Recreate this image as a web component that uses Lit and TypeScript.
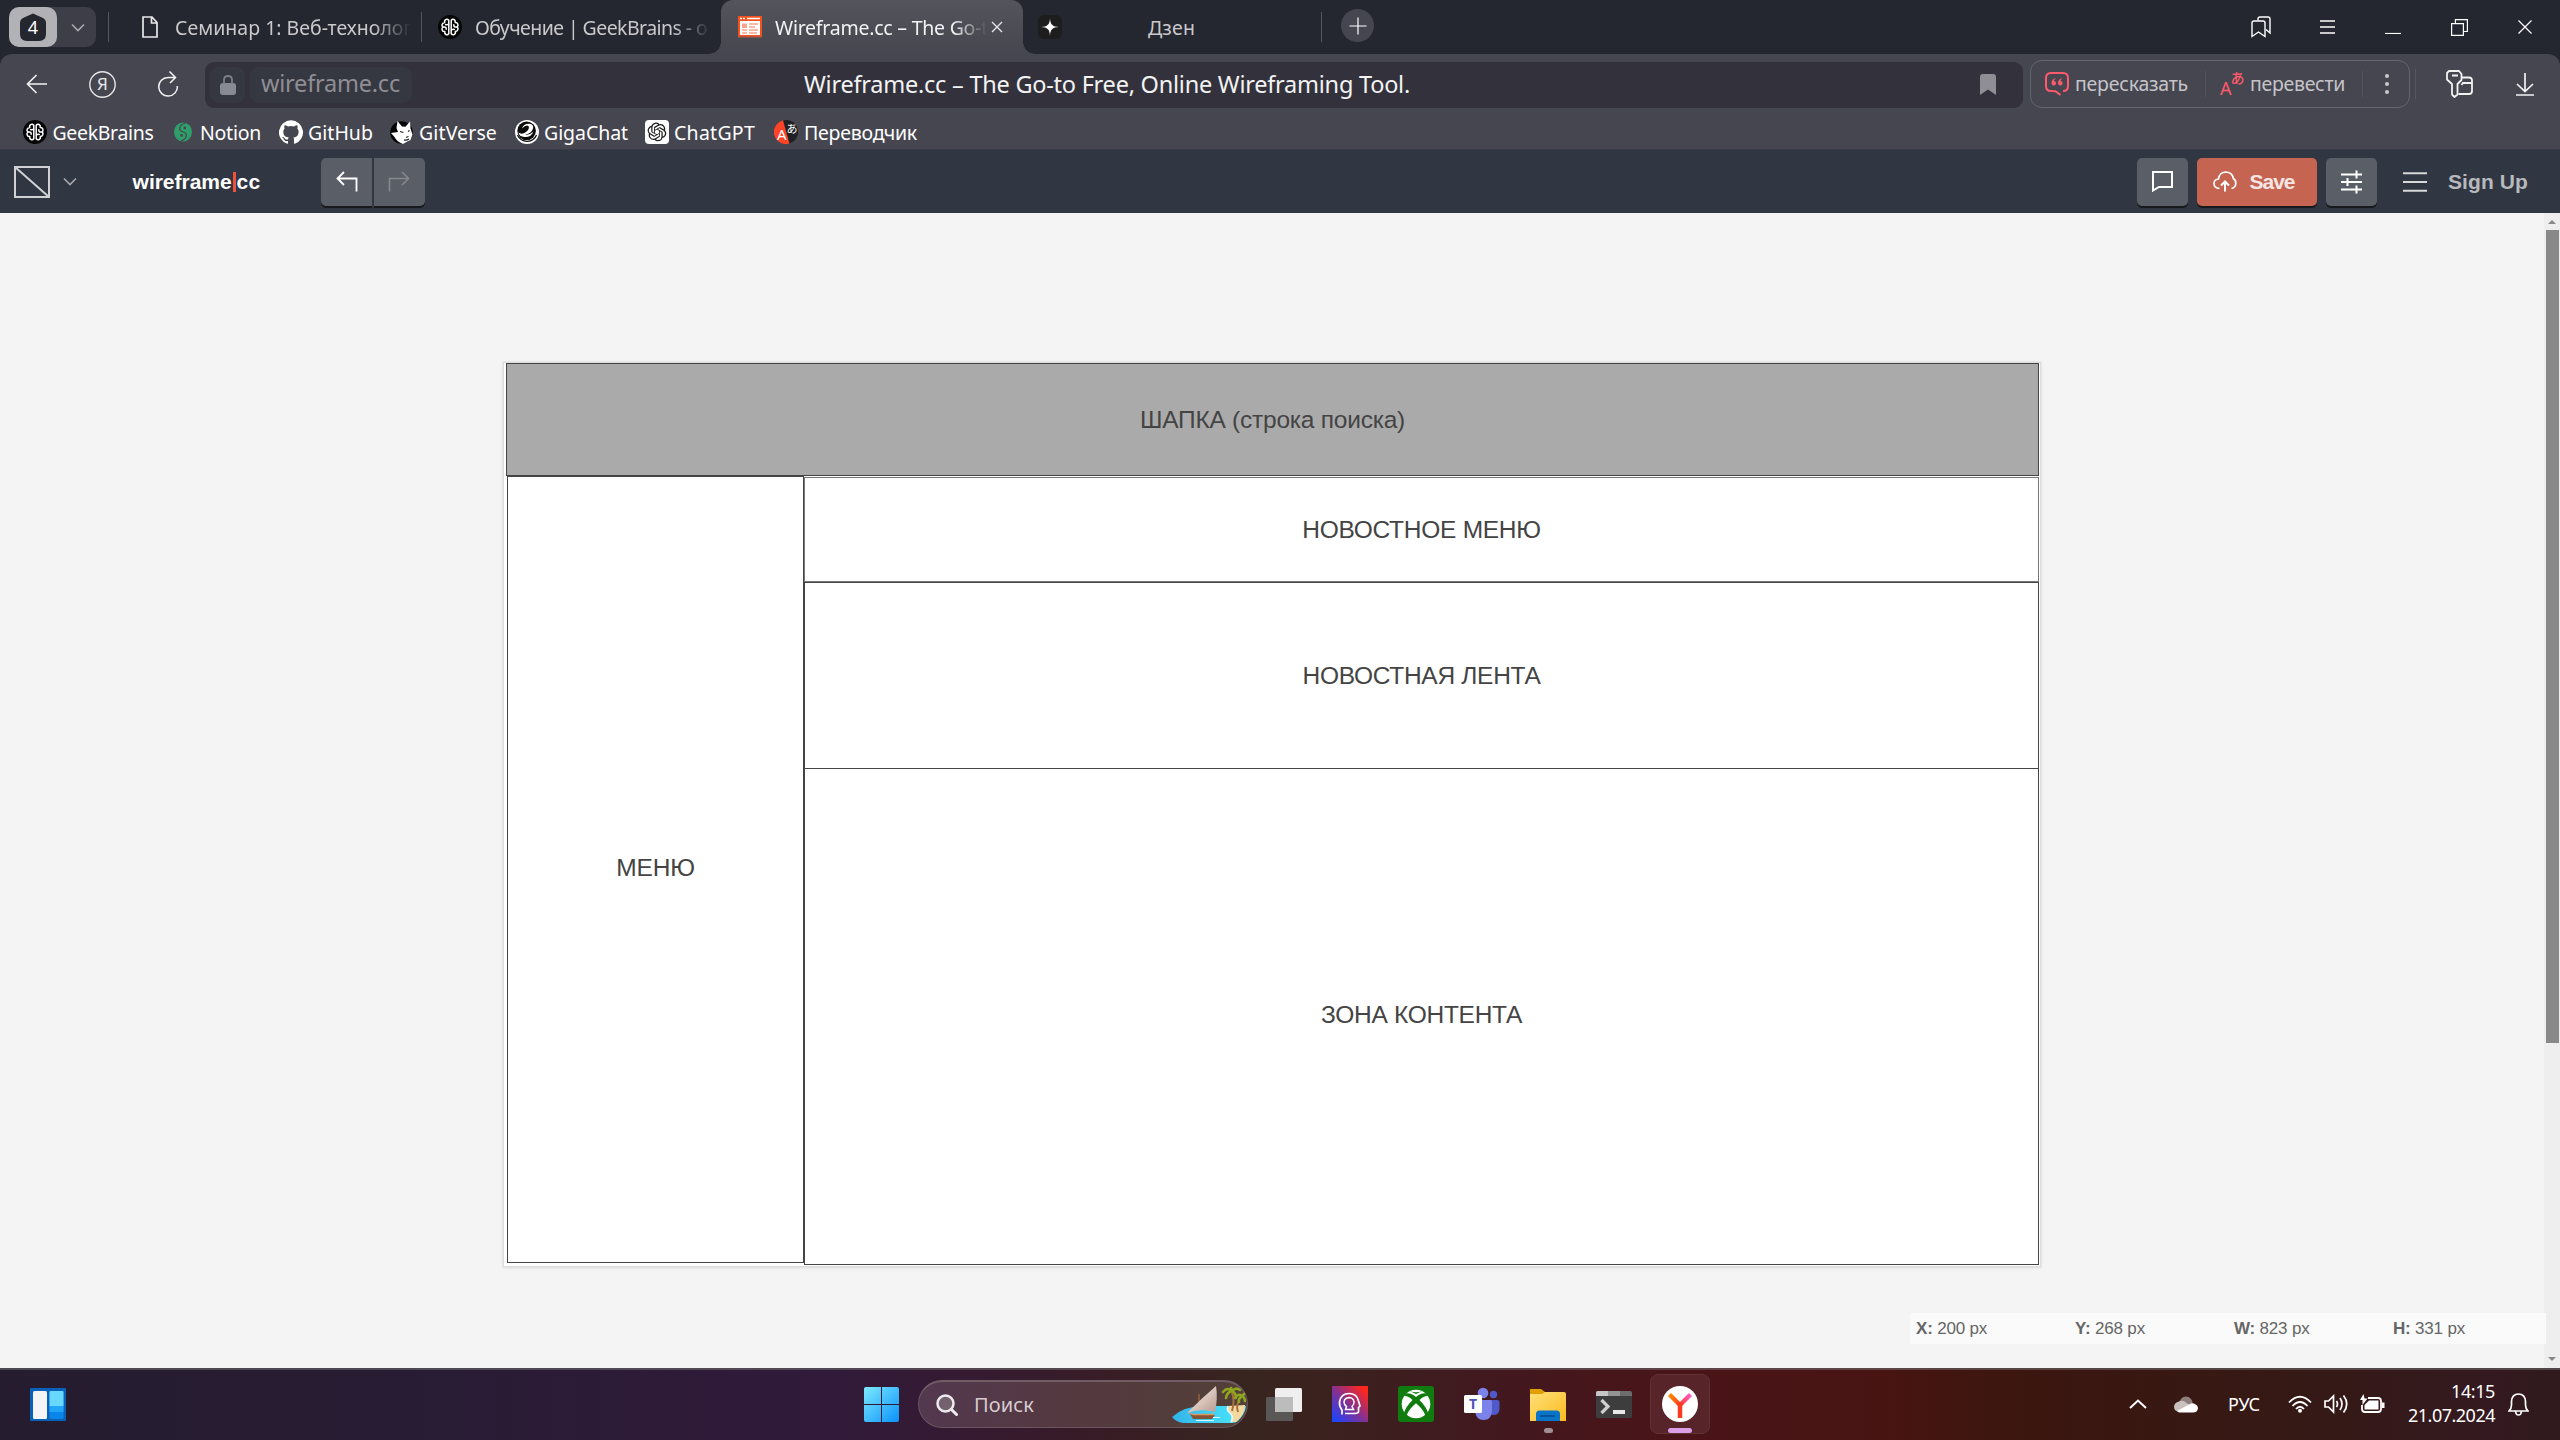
import { LitElement, html, css, svg } from "lit";
import { customElement } from "lit/decorators.js";

/* Text whose advance is spread evenly so that it fills a given width. */
const fit = (text: string, width: number, cls = "") =>
  html`<span class="fit ${cls}" data-w=${width}>${text}</span>`;

const icon = (w: number, h: number, body: unknown, cls = "") =>
  html`<svg class="ic ${cls}" width=${w} height=${h} viewBox="0 0 ${w} ${h}" fill="none">${body}</svg>`;

const lobe = svg`<path d="M10.800 5.200C8.800 3 5.800 5 6.800 7.400C3.800 7.600 3.200 11 5 12C3 13.400 4.200 16.800 6.800 16.600C6.200 19.400 9.200 20.800 10.800 18.800Z"/><path d="M10.500 9C9.500 10 8.600 9.900 7.600 9.500M5.500 12.100C7.500 11.600 8.300 12.600 8.200 14.200"/>`;
const brain = svg`<circle cx="12" cy="12" r="12" fill="#050505"/>
  <g stroke="#fff" stroke-width="1.500" stroke-linecap="round" stroke-linejoin="round">${lobe}<g transform="rotate(180 12 12)">${lobe}</g></g>`;

const icons = {
  house: icon(26, 28, svg`<path d="M13 0.500L23 5Q26 6.500 26 10V21Q26 28 19 28H7Q0 28 0 21V10Q0 6.500 3 5Z" fill="#25272f"/>`),
  chev: icon(14, 9, svg`<path d="M1 1.500L7 7.500L13 1.500" stroke="#a8a8ae" stroke-width="1.600"/>`),
  doc: icon(16, 22, svg`<path d="M1 1H10L15 6.500V21H1ZM9.500 1V7H15" stroke="#e8e8ea" stroke-width="1.700"/>`),
  brain: icon(24, 24, brain),
  wf: icon(24, 22, svg`<rect width="24" height="20" fill="#f4511e"/><rect y="20" width="24" height="1.500" fill="#b9583c"/>
    <path d="M2 5H22V19H2Z" fill="#fff"/><path d="M2 2.500H4M5 2.500H7M9 2.500H22" stroke="#fff" stroke-width="1.300"/>
    <path d="M4 7.500H9V12H4Z" fill="#f7a48a"/><path d="M11 8H20M11 11H17M11 14H20M4 14H9M4 17H9M11 17H19" stroke="#f4744d" stroke-width="1.200"/>`),
  x: icon(12, 12, svg`<path d="M1 1L11 11M11 1L1 11" stroke="#e4e4e6" stroke-width="1.400"/>`),
  zen: icon(24, 24, svg`<rect width="24" height="24" rx="6" fill="#1d1d1d"/><path d="M12 3C12.200 9.500 14.500 11.800 21 12C14.500 12.200 12.200 14.500 12 21C11.800 14.500 9.500 12.200 3 12C9.500 11.800 11.800 9.500 12 3Z" fill="#fff"/>`),
  plus: icon(18, 18, svg`<path d="M9 0.500V17.500M0.500 9H17.500" stroke="#fff" stroke-width="1.200"/>`),
  marks: icon(20, 22, svg`<path d="M7 4.500V3Q7 1 9 1H17Q19 1 19 3V17L15 13.500" stroke="#fff" stroke-width="1.400"/><path d="M3 5H12Q14 5 14 7V20.500L7.500 16L1 20.500V7Q1 5 3 5Z" stroke="#fff" stroke-width="1.400"/>`),
  menu: icon(15, 14, svg`<path d="M0 1H15M0 7H15M0 13H15" stroke="#fff" stroke-width="1.300"/>`),
  min: icon(16, 14, svg`<path d="M0 13.500H16" stroke="#fff" stroke-width="1.200"/>`),
  restore: icon(17, 17, svg`<path d="M0.600 4.600H12.400V16.400H0.600ZM4.400 4.500V0.600H16.400V12.500H12.500" stroke="#fff" stroke-width="1.200"/>`),
  close: icon(14, 14, svg`<path d="M0.500 0.500L13.500 13.500M13.500 0.500L0.500 13.500" stroke="#fff" stroke-width="1.200"/>`),
  back: icon(21, 20, svg`<path d="M21 10H1.500M10.500 1L1.500 10L10.500 19" stroke="#f2f2f3" stroke-width="1.600"/>`),
  ya: icon(27, 27, svg`<circle cx="13.500" cy="13.500" r="12.700" stroke="#e6e6e8" stroke-width="1.400"/>`),
  reload: icon(22, 26, svg`<path d="M17.500 7.500H11A9.300 9.300 0 1 0 20.300 16M12.500 1.500L18.500 7.500L13 13" stroke="#f2f2f3" stroke-width="1.500" transform="translate(-1 -1)"/>`),
  lock: icon(16, 20, svg`<rect y="8" width="16" height="12" rx="3" fill="#868b94"/><path d="M4 9V5Q4 1 8 1Q12 1 12 5V9" stroke="#7a7f88" stroke-width="1.800"/>`),
  flag: icon(16, 21, svg`<path d="M3 0H13Q16 0 16 3V21L8 15.500L0 21V3Q0 0 3 0Z" fill="#8f8e95"/>`),
  quote: icon(24, 24, svg`<path d="M8 19H6Q1 19 1 14V6Q1 1 6 1H18Q23 1 23 6V14Q23 19 18 19M8 19.200H10.500L15.500 23" stroke="#ff5a6b" stroke-width="2"/>
    <path d="M11 6C8 6.500 6.500 8.500 6.500 11A2.300 2.300 0 1 0 9 8.900C9.200 7.800 10 7 11 6ZM17.500 6C14.500 6.500 13 8.500 13 11A2.300 2.300 0 1 0 15.500 8.900C15.700 7.800 16.500 7 17.500 6Z" fill="#ff5a6b"/>`),
  dots: icon(4, 20, svg`<g fill="#c9c9cd"><circle cx="2" cy="2" r="2"/><circle cx="2" cy="10" r="2"/><circle cx="2" cy="18" r="2"/></g>`),
  keys: icon(27, 28, svg`<path d="M3 1H13L15.500 4V10L11.500 14V24.500L8.500 27L6 24.500V14L1 9.500V3ZM6 5.500H12" stroke="#f2f2f3" stroke-width="1.800" stroke-linejoin="round"/><path d="M16 7.500H23Q26 7.500 26 10.500V21Q26 24 23 24H12.500M15.500 15L17 13H26" stroke="#f2f2f3" stroke-width="1.800"/>`),
  down: icon(18, 23, svg`<path d="M9 0V18M1 11L9 18.500L17 11M0 22H18" stroke="#f2f2f3" stroke-width="1.700"/>`),
  notion: icon(18, 20, svg`<ellipse cx="9" cy="10" rx="9" ry="9.500" fill="#2f9e6a"/><path d="M11.500 1C4.500 3 4 8.500 9 10C14 11.500 13.500 16.500 7 19" stroke="#464650" stroke-width="1.200"/><circle cx="10.800" cy="6" r="1.400" fill="#464650"/><circle cx="7.500" cy="13.500" r="1.400" fill="#464650"/>`),
  github: icon(24, 24, svg`<path fill="#fff" d="M12 .3a12 12 0 0 0-3.800 23.400c.6.100.8-.3.800-.6v-2c-3.300.7-4-1.600-4-1.600-.6-1.400-1.400-1.800-1.400-1.800-1-.7.100-.7.100-.7 1.200 0 1.900 1.200 1.900 1.200 1 1.800 2.800 1.300 3.500 1 0-.8.400-1.300.7-1.600-2.700-.3-5.500-1.300-5.500-6 0-1.200.5-2.300 1.300-3.100-.2-.4-.6-1.600 0-3.200 0 0 1-.3 3.400 1.200a11.500 11.500 0 0 1 6 0c2.300-1.500 3.300-1.200 3.300-1.200.6 1.600.2 2.800 0 3.200.9.800 1.300 1.900 1.300 3.200 0 4.600-2.800 5.600-5.500 5.900.5.400.9 1 .9 2.200v3.300c0 .3.100.7.800.6A12 12 0 0 0 12 .3"/>`),
  gitverse: icon(24, 24, svg`<circle cx="11.500" cy="12.500" r="11.300" fill="#060606"/><path d="M7.500 1L12 6.500L15.500 6.800L20 1.500L20.500 8.500L22.500 14.500L20.500 20L13 24Q7 22 4.500 17L1 13L8 12L6.500 8Z" fill="#fff"/><path d="M10 11.500L13.500 12.500M18 11.500L19.500 10.500M16 17.500L18.500 16.500M14 20Q17 20.500 19 19" stroke="#222" stroke-width="1.300"/>`),
  giga: icon(24, 24, svg`<circle cx="12" cy="12" r="12" fill="#fff"/><circle cx="11.600" cy="10.800" r="9.300" fill="#0c0c0c"/><path d="M7 8.500Q8.500 3.500 14.500 3.800Q19 4.500 18 8.500Q16.500 13.500 10.500 14.500Q13.500 15.500 18.500 11.500Q16 17.500 9.500 17Q4 16.500 3.500 12.500Q7 15 11 12Q15 9 13.500 6Q11 4.500 7 8.500Z" fill="#fff"/><path d="M2.500 15Q5.500 21.500 12.500 21.300Q19 21 21.500 15" stroke="#0c0c0c" stroke-width="1.300"/>`),
  gpt: icon(24, 24, svg`<rect width="24" height="24" rx="4" fill="#fff"/><path transform="translate(2.600 2.600) scale(.78)" fill="#1b1b1b" d="M22.2819 9.8211a5.9847 5.9847 0 0 0-.5157-4.9108 6.0462 6.0462 0 0 0-6.5098-2.9A6.0651 6.0651 0 0 0 4.9807 4.1818a5.9847 5.9847 0 0 0-3.9977 2.9 6.0462 6.0462 0 0 0 .7427 7.0966 5.98 5.98 0 0 0 .511 4.9107 6.051 6.051 0 0 0 6.5146 2.9001A5.9847 5.9847 0 0 0 13.2599 24a6.0557 6.0557 0 0 0 5.7718-4.2058 5.9894 5.9894 0 0 0 3.9977-2.9001 6.0557 6.0557 0 0 0-.7475-7.0729zm-9.022 12.6081a4.4755 4.4755 0 0 1-2.8764-1.0408l.1419-.0804 4.7783-2.7582a.7948.7948 0 0 0 .3927-.6813v-6.7369l2.02 1.1686a.071.071 0 0 1 .038.052v5.5826a4.504 4.504 0 0 1-4.4945 4.4944zm-9.6607-4.1254a4.4708 4.4708 0 0 1-.5346-3.0137l.142.0852 4.783 2.7582a.7712.7712 0 0 0 .7806 0l5.8428-3.3685v2.3324a.0804.0804 0 0 1-.0332.0615L9.74 19.9502a4.4992 4.4992 0 0 1-6.1408-1.6464zM2.3408 7.8956a4.485 4.485 0 0 1 2.3655-1.9728V11.6a.7664.7664 0 0 0 .3879.6765l5.8144 3.3543-2.0201 1.1685a.0757.0757 0 0 1-.071 0l-4.8303-2.7865A4.504 4.504 0 0 1 2.3408 7.872zm16.5963 3.8558L13.1038 8.364 15.1192 7.2a.0757.0757 0 0 1 .071 0l4.8303 2.7913a4.4944 4.4944 0 0 1-.6765 8.1042v-5.6772a.79.79 0 0 0-.407-.667zm2.0107-3.0231l-.142-.0852-4.7735-2.7818a.7759.7759 0 0 0-.7854 0L9.409 9.2297V6.8974a.0662.0662 0 0 1 .0284-.0615l4.8303-2.7866a4.4992 4.4992 0 0 1 6.6802 4.66zM8.3065 12.863l-2.02-1.1638a.0804.0804 0 0 1-.038-.0567V6.0742a4.4992 4.4992 0 0 1 7.3757-3.4537l-.142.0805L8.704 5.459a.7948.7948 0 0 0-.3927.6813zm1.0976-2.3654l2.602-1.4998 2.6069 1.4998v2.9994l-2.5974 1.4997-2.6067-1.4997Z"/>`),
  trans: icon(24, 24, svg`<path d="M10 0.200A12 12 0 1 0 15.500 23.500Z" fill="#ff4326"/><path d="M9 .4A12 12 0 0 1 15.500 23.500Z" fill="#202124"/>`),
  wfLogo: icon(36, 32, svg`<rect x="1" y="1" width="34" height="30" stroke="#cfd1d4" stroke-width="2"/><path d="M1 1L35 31" stroke="#cfd1d4" stroke-width="2"/>`),
  undo: icon(22, 21, svg`<path d="M8 1L1.500 7.500L8 14M1.500 7.500H20.500V20.500" stroke="#fff" stroke-width="1.800"/>`, "nudge"),
  redo: icon(22, 21, svg`<path d="M14 1L20.500 7.500L14 14M20.500 7.500H1.500V20.500" stroke="#85888d" stroke-width="1.600"/>`),
  comment: icon(21, 21, svg`<path d="M1 1H20V16H7L1 19.500Z" stroke="#fff" stroke-width="2"/>`),
  cloudUp: icon(24, 21, svg`<path d="M6.500 17.500Q1 17 1 12.500Q1 8.500 5.500 8Q6.500 1 13 1Q19.500 1.500 20.300 7.500Q23 9 22.800 12.500Q22.500 16.500 18.500 17.500" stroke="#fff" stroke-width="1.700"/><path d="M12 20.500V11M8 14.500L12 10.500L16 14.500" stroke="#fff" stroke-width="2"/>`),
  sliders: icon(21, 24, svg`<path d="M0 4.500H12M16 4.500H21M0 12H5M9 12H21M0 19.500H12M16 19.500H21M15.500 0.500V8.500M6.500 8V16M15.500 15.500V23.500M12 4.500H16M5 12H9M12 19.500H16" stroke="#fff" stroke-width="2"/>`),
  burger: icon(24, 20, svg`<path d="M0 1.300H24M0 10H24M0 18.700H24" stroke="#d6d8da" stroke-width="2"/>`),
  widgets: icon(36, 33, svg`<rect width="36" height="33" rx="1" fill="#0a62b8"/><rect x="3" y="3" width="14" height="28" rx="1.500" fill="#f5f5f6"/><rect x="19.500" y="3" width="14" height="28" rx="1.500" fill="#0a86ea"/><path d="M19.500 4Q19.500 3 20.500 3H32.500Q33.500 3 33.500 4V18H19.500Z" fill="#69d8ff"/><rect x="19.500" y="18" width="14" height="6" fill="#22a5f7"/>`),
  start: icon(35, 35, svg`<defs><linearGradient id="sg" x1="0" y1="0" x2="35" y2="35" gradientUnits="userSpaceOnUse"><stop stop-color="#7deaff"/><stop offset="1" stop-color="#0a92fb"/></linearGradient></defs><path d="M2 0H17V17H0V2Q0 0 2 0ZM18 0H33Q35 0 35 2V17H18ZM0 18H17V35H2Q0 35 0 33ZM18 18H35V33Q35 35 33 35H18Z" fill="url(#sg)"/>`),
  search: icon(22, 22, svg`<circle cx="9.500" cy="9.500" r="8" fill="#75606e" stroke="#ecebee" stroke-width="2.500"/><path d="M15.500 15.500L20.500 20.500" stroke="#ecebee" stroke-width="3" stroke-linecap="round"/>`),
  boat: icon(74, 38, svg`<defs><linearGradient id="sea" x1="0" x2="1"><stop stop-color="#32b4ea"/><stop offset="1" stop-color="#4ce8fb"/></linearGradient><linearGradient id="sail" x1="0" y1="0" x2="1" y2="1"><stop stop-color="#fff5ec"/><stop offset="1" stop-color="#b99a90"/></linearGradient></defs>
    <path d="M0 31Q12 20 32 20H74Q73 28 66 35Q64 37 60 37H11Q4 36 0 31Z" fill="url(#sea)"/>
    <path d="M56 20L73 19Q73 29 64 36L59 36Q63 31 58 27Q54 24 56 20Z" fill="#f3d9a0"/><path d="M56 20Q54 24 58 27Q62 31 59 36" stroke="#eefcff" stroke-width="1.500"/>
    <path d="M60 25Q63 16 60 6M66 26Q63 18 70 9" stroke="#a8703d" stroke-width="2"/>
    <g stroke="#8fa51d" stroke-width="2.600" stroke-linecap="round"><path d="M60 5Q55 1 51 6M60 5Q55 6 54 12M60 5Q64 7 64 12M60 5Q64 1 68 4M60 5L59 2M70 10Q66 7 63 12M70 10Q66 13 67 16M70 10Q73 12 73 15M70 10L72 8"/></g>
    <path d="M27 17V8" stroke="#96603c" stroke-width="1.500"/><path d="M44 0Q30 12 15 27Q28 22 43 26Q46 12 44 0Z" fill="url(#sail)"/><path d="M18 28L43 29L40 33H21Z" fill="#845433"/><path d="M17 27L21 28.500H42" stroke="#d79a62" stroke-width="1.300"/><path d="M24 34.500H42M41 31.500H48" stroke="#d9faff" stroke-width="1.200"/>`),
  taskview: icon(36, 35, svg`<rect y="10" width="27" height="24" rx="1.500" fill="#5a5857"/><rect x="9" y="1" width="27" height="24" rx="1.500" fill="#efefef"/><path d="M9 10H27V25H9Z" fill="#bdbcbc"/>`),
  head: icon(36, 36, svg`<defs><linearGradient id="hg" x1="0" y1="1" x2="1" y2="0"><stop offset=".05" stop-color="#1d44ff"/><stop offset=".5" stop-color="#8a2f8c"/><stop offset=".9" stop-color="#ff271c"/></linearGradient></defs><rect width="36" height="36" fill="url(#hg)"/>
    <path d="M10 28.500V24Q7 20 7.500 16Q9 7.500 17 7.500Q25 7.500 26.500 15L28 20L26.500 21.500V26Q26 27.500 21 27.500H13" stroke="#fff" stroke-width="1.700"/><path d="M13.500 23.500H21.500L20 20.500Q22.500 18 22 15.500Q21 11.500 17 11.500Q12.500 12 12 16Q12 19 14.500 20.500Z" stroke="#fff" stroke-width="1.500"/>`),
  xbox: icon(36, 36, svg`<rect width="36" height="36" rx="3" fill="#107c10"/><circle cx="18" cy="18" r="14.300" fill="#fff"/><path d="M8 7.500Q12.500 6.500 18 11Q23.500 6.500 28 7.500L30 10Q26 9.500 21.500 14Q28.500 21 30 27L27.500 29.500Q25 23 18 17.300Q11 23 8.500 29.500L6 27Q7.500 21 14.500 14Q10 9.500 6 10ZM11.500 5Q18 7.500 24.500 5L18 8Z" fill="#107c10"/>`),
  teams: icon(36, 34, svg`<circle cx="29.500" cy="7.500" r="3.700" fill="#5059c9"/><path d="M25 13H33Q35.500 13 35.500 15.500V22Q35 28 29.500 28Q26 28 25 25Z" fill="#5059c9"/><circle cx="19" cy="6" r="5.300" fill="#7b83eb"/><path d="M11 13H26.500Q28 13 28 15V24Q27.500 33 19.500 33Q12 33 11 24Z" fill="#7b83eb"/><rect y="8" width="18" height="18" rx="1.500" fill="#fff"/>`),
  folder: icon(36, 33, svg`<defs><linearGradient id="fg" x1="0" y1="0" x2="1" y2="1"><stop stop-color="#ffe07b"/><stop offset="1" stop-color="#fbbb1e"/></linearGradient></defs><path d="M0 1H11L15 4V12H0Z" fill="#e2a000"/><path d="M0 6H12L15 4H34Q36 4 36 6V33H0Z" fill="url(#fg)"/><path d="M6 33V26Q6 22.500 9.500 22.500H26.500Q30 22.500 30 26V33Z" fill="#0a74c8"/><path d="M10 28H25" stroke="#084a86" stroke-width="1.500"/>`),
  term: icon(36, 27, svg`<rect width="36" height="27" rx="1.500" fill="#3d3d3d"/><path d="M0 5V1.500Q0 0 1.500 0H12V5Z" fill="#c6c6c6"/><path d="M12 0H24V5H12Z" fill="#949494"/><path d="M24 0H34.500L36 1.500V5H24Z" fill="#6d6d6d"/><path d="M5.500 9L12 15.500L5.500 22" stroke="#cecece" stroke-width="3.200"/><rect x="17" y="19" width="12" height="4" fill="#e8e8e8"/>`),
  yandex: icon(36, 36, svg`<defs><linearGradient id="yl" x1="7" y1="9" x2="18" y2="20" gradientUnits="userSpaceOnUse"><stop stop-color="#ff8a00"/><stop offset="1" stop-color="#ff3b1f"/></linearGradient><linearGradient id="yr" x1="29" y1="9" x2="18" y2="20" gradientUnits="userSpaceOnUse"><stop stop-color="#ff5ccf"/><stop offset="1" stop-color="#ff3b1f"/></linearGradient></defs><circle cx="18" cy="18" r="18" fill="#fff"/><path d="M7.500 8.500L18 19" stroke="url(#yl)" stroke-width="4.500"/><path d="M28.500 8.500L18 19" stroke="url(#yr)" stroke-width="4.500"/><path d="M18 17V32" stroke="#ff3b1f" stroke-width="4.500"/>`),
  up: icon(18, 10, svg`<path d="M1 9L9 1.500L17 9" stroke="#fff" stroke-width="2"/>`),
  cloud: icon(24, 17, svg`<circle cx="12" cy="7" r="6.500" fill="#8e7f7d"/><path d="M5 5.500Q9 3.500 12.500 7L20 11L5 16Q0 15 0 10.500Q.5 6.500 5 5.500Z" fill="#c9c0bf"/><path d="M3 15L16 8Q18 6.500 21 8Q24 9.500 24 12Q23.500 16.500 19 16.500H5Z" fill="#fff"/>`),
  wifi: icon(24, 18, svg`<path d="M1 7.500Q12 -4 23 7.500M4.500 11Q12 3 19.500 11M8 14Q12 9.500 16 14" stroke="#fff" stroke-width="1.800"/><circle cx="12" cy="15.800" r="2" fill="#fff"/>`),
  sound: icon(25, 20, svg`<path d="M1 7H4.500L9.500 2V18L4.500 13H1Z" stroke="#fff" stroke-width="1.700"/><path d="M12.500 7Q14.500 10 12.500 13M16 4Q20 10 16 16M19.500 1.500Q26 10 19.500 18.500" stroke="#fff" stroke-width="1.700"/>`),
  battery: icon(25, 20, svg`<path d="M8 4H18Q21 4 21 7V15Q21 18 18 18H5Q2 18 2 15V11" stroke="#fff" stroke-width="1.800"/><path d="M9 6.500H18.500V15.500H4.500V11Z" fill="#fff"/><path d="M22 8.500H24.500V14H22Z" fill="#fff"/><path d="M3.500 0L0 6H2.500V11L7.500 4.500H4.500Z" fill="#fff"/>`),
  bell: icon(21, 23, svg`<path d="M1 18Q3.500 15.500 3.500 12V8.500Q4 1 10.500 1Q17 1 17.500 8.500V12Q17.500 15.500 20 18ZM7.500 18.500Q8 22 10.500 22Q13 22 13.500 18.500" stroke="#fff" stroke-width="1.700"/>`),
};

@customElement("app-root")
export class AppRoot extends LitElement {
  static styles = css`
    :host { display: block; width: 2560px; height: 1440px; overflow: hidden; font-family: "Noto Sans", "Open Sans", sans-serif; }
    * { box-sizing: border-box; }
    .ic { display: block; flex: none; }
    .fit { display: block; white-space: nowrap; justify-self: start; }
    .screen { display: flex; flex-direction: column; height: 1440px; background: #252730; }
    .row { display: grid; align-items: center; }

    .tabs { height: 54px; padding-left: 9px; grid-template-rows: 54px; font-size: 19.500px; color: #c9c9cc;
      grid-template-columns: 99px 34px 33px 246px 17px 37px 246px 302px 15px 110px 173px 20px 910px 69px 65px 66px 67px 42px; }
    .group { display: flex; align-items: center; width: 87px; height: 40px; border-radius: 10px; background: #3d3e47; }
    .count { display: grid; place-items: center; width: 48px; height: 40px; border-radius: 10px; background: #b1b1b6; }
    .count > * { grid-area: 1 / 1; }
    .num { color: #fff; font-size: 18px; line-height: 20px; }
    .group > .ic { margin-left: 14px; }
    .sep { width: 1px; height: 30px; background: #55565e; }
    .tabs .fit { padding-top: 1px; }
    .clip { overflow: hidden; width: 236px; line-height: 30px;
      -webkit-mask-image: linear-gradient(90deg, #000 84%, transparent); mask-image: linear-gradient(90deg, #000 84%, transparent); }
    .tab { position: relative; display: grid; grid-template-columns: 37px 216px 12px; align-items: center; width: 302px; height: 54px; padding-left: 17px;
      border-radius: 12px 12px 0 0; background: linear-gradient(#54545c, #464650); color: #f2f2f3; }
    .tab::before, .tab::after { content: ""; position: absolute; bottom: 0; width: 12px; height: 12px; }
    .tab::before { left: -12px; background: radial-gradient(circle at 0 0, transparent 11.500px, #464650 12px); }
    .tab::after { right: -12px; background: radial-gradient(circle at 100% 0, transparent 11.500px, #464650 12px); }
    .tab .clip { width: 212px; }
    .add { display: grid; place-items: center; width: 33px; height: 33px; margin-bottom: 3px; border-radius: 50%; background: #454650; }

    .browser { height: 96px; border-radius: 12px 12px 0 0; background: #464650; border-bottom: 1px solid #3a3c45; }
    .tools { height: 60px; padding-left: 26px; grid-template-columns: 63px 69px 47px 1825px 385px 31px 70px 44px; }
    .ring { display: grid; place-items: center; width: 27px; }
    .ring > * { grid-area: 1 / 1; }
    .yaletter { font-size: 17px; line-height: 20px; color: #e6e6e8; }
    .address { display: grid; grid-template-columns: 57px 542px 1176px 28px; align-items: center; width: 1818px; height: 46px; margin-top: 1px;
      border-radius: 9px; background: #33323c; font-size: 23.500px; }
    .lockbox { display: grid; place-items: center; width: 35px; height: 36px; margin-left: 5px; border-radius: 9px; background: #363841; }
    .host { width: 162px; height: 36px; margin-left: -12px; padding-left: 11px; line-height: 33px; border-radius: 9px; background: #363841; color: #8f8e95; }
    .title { color: #f2f2f3; line-height: 32px; padding-bottom: 2px; }
    .pill { display: grid; grid-template-columns: 31px 129px 15px 31px 111px 23px 20px; align-items: center; width: 380px; height: 48px; padding-left: 14px;
      border: 1px solid #65656e; border-radius: 12px; font-size: 19.500px; color: #c4c4c8; }
    .pill .fit { margin-left: -1px; padding-bottom: 1px; }
    .pill .sep { height: 26px; background: #53535c; }
    .aa { display: flex; color: #ff5a6b; font: 18px/24px "Noto Sans", sans-serif; padding-top: 8px; }
    .aa b { font: 500 14px/20px "Noto Sans CJK JP", sans-serif; margin: -9px 0 0 -1px; }
    .bookmarks { height: 36px; padding-left: 23px; font-size: 19.500px; color: #fff; line-height: 28px;
      grid-template-columns: 29.500px 121.500px 26px 79px 29px 82px 29px 96px 29px 101px 29px 100px 30px 121px; }
    .bookmarks .fit { padding-top: 1px; }
    .tr { display: grid; width: 24px; height: 24px; }
    .tr > * { grid-area: 1 / 1; }
    .trt { display: flex; color: #fff; font: 15px/24px "Noto Sans", sans-serif; padding: 2px 0 0 3px; }
    .trt b { font: 11px/18px "Noto Sans CJK JP", sans-serif; margin-top: -3px; }

    .app { height: 63px; padding-left: 14px; background: #303642; font-family: "Liberation Sans", Arial, sans-serif; font-weight: 700; font-size: 21px;
      grid-template-columns: 49px 69.600px 188.400px 1816px 60px 129px 77px 45px 112px; }
    .app .fit { padding-top: 1px; }
    .logo { display: flex; color: #fff; }
    .bar { width: 3px; height: 20px; margin: 3px 1px 0; background: #f0513c; }
    .btn { display: flex; align-items: center; justify-content: center; width: 51px; height: 48px; border-radius: 5px; background: #5a5e66; box-shadow: 0 2px 0 #17191d; }
    .nudge { margin-left: 2px; }
    .pair { display: flex; gap: 2px; }
    .pair .btn:first-child { border-radius: 5px 0 0 5px; }
    .pair .btn:last-child { border-radius: 0 5px 5px 0; }
    .save { width: 120px; gap: 12px; padding-right: 6px; background: #c66452; color: #f5e6e3; }
    .signup { color: #b7b9bc; }

    .work { display: grid; grid-template-columns: 2544px 16px; height: 1155px; background: #f4f4f4; }
    .canvas { display: flex; flex-direction: column; padding-left: 504px; font-family: "Liberation Sans", Arial, sans-serif; }
    .page { display: flex; flex-direction: column; flex: none; width: 1536px; height: 903px; margin-top: 150px; padding: 0 1px 1px 2px; background: #fff;
      box-shadow: 0 0 0 1.500px #dedede, 0 1px 4px #d5d5d5; font-size: 24.500px; color: #444; }
    .box { display: flex; flex: none; align-items: center; justify-content: center; border: 1px solid #444; }
    .head { height: 113px; background: #aaa; padding-top: 1px; }
    .cols { display: grid; grid-template-columns: 297px 1235px; margin-left: 1px; align-items: start; }
    .menu { height: 787px; padding-bottom: 3px; }
    .stack { display: flex; flex-direction: column; padding-top: 1px; }
    .news { height: 105px; border-color: #777; }
    .feed { height: 186px; border-bottom: 0; }
    .zone { height: 497px; padding-bottom: 3px; }
    .info { display: grid; grid-template-columns: 159px 159px 159px 1fr; align-items: center; position: relative; width: 636px; height: 31px; margin: 47px 0 0 1406px; padding: 1px 0 0 6px;
      background: #fafafa; font-size: 17px; color: #666; }
    .scroll { display: flex; flex-direction: column; align-items: center; height: 1155px; background: #eee; }
    .arrow { flex: none; width: 0; height: 0; border: 4px solid transparent; border-bottom: 4px solid #888; border-top: 0; margin-top: 7px; }
    .thumb { flex: none; width: 13px; height: 813px; margin: 6px 0 0 1px; background: #888; }
    .arrow.dn { margin-top: 314px; border-top: 4px solid #888; border-bottom: 0; }

    .task { height: 72px; box-shadow: inset 0 2px 0 rgba(110, 110, 110, .55); padding-left: 30px; color: #fff; font-size: 18px;
      background: linear-gradient(90deg, #251c2f 0, #281c34 400px, #311a3a 830px, #351a32 960px, #381c26 1100px, #38251f 1250px, #41191f 1480px, #4a1418 1690px, #481412 1880px, #3c160f 2010px, #351915 2300px, #341920 2490px, #2f1a1c 2560px);
      grid-template-columns: 834px 54px 348px 66px 66px 66px 66px 66px 54px 479px 45px 54px 60px 36px 36px 48px 100px 40px; }
    .field { display: grid; grid-template-columns: 38px 198px 74px; align-items: center; width: 330px; height: 48px; padding-left: 17px; border-radius: 24px;
      background: linear-gradient(90deg, #53384f, #54393f 50%, #524038); border: 1px solid #6b5560; border-top: 2px solid #715c66; font-size: 20px; color: #d6ccd1; }
    .field .fit { padding-bottom: 1px; }
    .tile { display: flex; flex-direction: column; align-items: center; justify-content: flex-end; width: 60px; height: 60px; border-radius: 8px; }
    .tile.on { background: #562429; border: 1px solid #613136; }
    .ind { width: 24px; height: 5px; margin-top: 6px; border-radius: 3px; background: #dc9ee6; }
    .small { width: 9px; background: #a08e92; margin-top: 7px; }
    .foldbox { display: flex; flex-direction: column; align-items: center; width: 36px; margin-top: 13px; }
    .tm { display: grid; width: 36px; align-items: center; }
    .tm > * { grid-area: 1 / 1; }
    .tl { width: 18px; text-align: center; color: #4b53bc; font: 700 14px/18px "Noto Sans", sans-serif; }
    .clock { display: flex; flex-direction: column; align-items: flex-end; width: 87px; line-height: 24px; padding-bottom: 2px; }
  `;

  protected async firstUpdated() {
    await document.fonts.ready;
    this.renderRoot.querySelectorAll<HTMLElement>(".fit").forEach((el) => {
      const range = document.createRange();
      range.selectNodeContents(el);
      const natural = range.getBoundingClientRect().width;
      const count = (el.textContent ?? "").length;
      el.style.letterSpacing = `${(Number(el.dataset.w) - natural) / count}px`;
    });
  }

  render() {
    return html`<div class="screen">
      <div class="row tabs">
        <div class="group"><div class="count">${icons.house}<span class="num">4</span></div>${icons.chev}</div>
        <div class="sep"></div>
        ${icons.doc}
        <div class="clip">${fit("Семинар 1: Веб-технолог", 237)}</div>
        <div class="sep"></div>
        ${icons.brain}
        <div class="clip">${fit("Обучение | GeekBrains - о", 232)}</div>
        <div class="tab">${icons.wf}<div class="clip">${fit("Wireframe.cc – The Go-t", 213)}</div>${icons.x}</div>
        <span></span>
        ${icons.zen}
        ${fit("Дзен", 47)}
        <div class="sep"></div>
        <div class="add">${icons.plus}</div>
        ${icons.marks}${icons.menu}${icons.min}${icons.restore}${icons.close}
      </div>
      <div class="browser">
        <div class="row tools">
          ${icons.back}
          <div class="ring">${icons.ya}<span class="yaletter">Я</span></div>
          ${icons.reload}
          <div class="address">
            <div class="lockbox">${icons.lock}</div>
            <div class="host">${fit("wireframe.cc", 139)}</div>
            ${fit("Wireframe.cc – The Go-to Free, Online Wireframing Tool.", 606, "title")}
            ${icons.flag}
          </div>
          <div class="pill">
            ${icons.quote}${fit("пересказать", 113)}<div class="sep"></div>
            <span class="aa">A<b>あ</b></span>${fit("перевести", 95)}<div class="sep"></div>${icons.dots}
          </div>
          <div class="sep"></div>
          ${icons.keys}${icons.down}
        </div>
        <div class="row bookmarks">
          ${icons.brain}${fit("GeekBrains", 101)}
          ${icons.notion}${fit("Notion", 61)}
          ${icons.github}${fit("GitHub", 65)}
          ${icons.gitverse}${fit("GitVerse", 78)}
          ${icons.giga}${fit("GigaChat", 84)}
          ${icons.gpt}${fit("ChatGPT", 81)}
          <div class="tr">${icons.trans}<span class="trt">A<b>あ</b></span></div>${fit("Переводчик", 113)}
        </div>
      </div>
      <div class="row app">
        ${icons.wfLogo}${icons.chev}
        <div class="logo">${fit("wireframe", 99)}<div class="bar"></div>${fit("cc", 24)}</div>
        <div class="pair"><div class="btn">${icons.undo}</div><div class="btn">${icons.redo}</div></div>
        <div class="btn">${icons.comment}</div>
        <div class="btn save">${icons.cloudUp}${fit("Save", 45)}</div>
        <div class="btn">${icons.sliders}</div>
        ${icons.burger}
        ${fit("Sign Up", 80, "signup")}
      </div>
      <div class="work">
        <div class="canvas">
          <div class="page">
            <div class="box head">${fit("ШАПКА (строка поиска)", 265)}</div>
            <div class="cols">
              <div class="box menu">${fit("МЕНЮ", 78.5)}</div>
              <div class="stack">
                <div class="box news">${fit("НОВОСТНОЕ МЕНЮ", 238.5)}</div>
                <div class="box feed">${fit("НОВОСТНАЯ ЛЕНТА", 238)}</div>
                <div class="box zone">${fit("ЗОНА КОНТЕНТА", 201)}</div>
              </div>
            </div>
          </div>
          <div class="info">
            <div class="fit" data-w="71"><b>X:</b> 200 px</div>
            <div class="fit" data-w="70"><b>Y:</b> 268 px</div>
            <div class="fit" data-w="75.5"><b>W:</b> 823 px</div>
            <div class="fit" data-w="72"><b>H:</b> 331 px</div>
          </div>
        </div>
        <div class="scroll"><div class="arrow"></div><div class="thumb"></div><div class="arrow dn"></div></div>
      </div>
      <div class="row task">
        ${icons.widgets}${icons.start}
        <div class="field">${icons.search}${fit("Поиск", 60)}${icons.boat}</div>
        ${icons.taskview}${icons.head}${icons.xbox}
        <div class="tm">${icons.teams}<span class="tl">T</span></div>
        <div class="foldbox">${icons.folder}<div class="ind small"></div></div>
        ${icons.term}
        <div class="tile on">${icons.yandex}<div class="ind"></div></div>
        ${icons.up}${icons.cloud}
        ${fit("РУС", 32)}
        ${icons.wifi}${icons.sound}${icons.battery}
        <div class="clock">${fit("14:15", 44)}${fit("21.07.2024", 87)}</div>
        ${icons.bell}
      </div>
    </div>`;
  }
}
